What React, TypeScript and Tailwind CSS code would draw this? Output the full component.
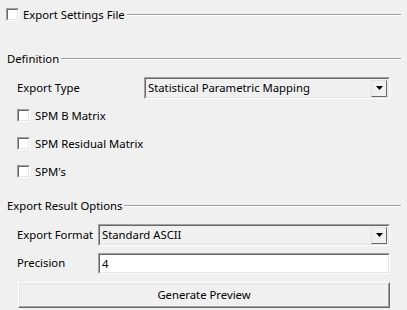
import React from "react";

const font = { fontFamily: '"Noto Sans", "Liberation Sans", sans-serif' };

const CheckBox = () => (
  <div className="w-[13px] h-[13px] shrink-0 border border-t-[#a0a0a0] border-l-[#a0a0a0] border-b-white border-r-white">
    <div className="w-full h-full bg-white border border-t-[#696969] border-l-[#696969] border-b-[#e3e3e3] border-r-[#e3e3e3]" />
  </div>
);

const Etched = ({ className = "" }: { className?: string }) => (
  <div className={"flex-1 h-[2px] border-t border-t-[#a0a0a0] border-b border-b-white " + className} />
);

const Sunken = ({
  className = "",
  children,
}: {
  className?: string;
  children?: React.ReactNode;
}) => (
  <div className={"border border-t-[#a0a0a0] border-l-[#a0a0a0] border-b-white border-r-white " + className}>
    <div className="h-full w-full border border-t-[#696969] border-l-[#696969] border-b-[#e3e3e3] border-r-[#e3e3e3] flex items-center">
      {children}
    </div>
  </div>
);

const Select = ({ value, className }: { value: string; className: string }) => (
  <Sunken className={"bg-[#f0f0f0] " + className}>
    <span className="flex-1 pl-[2px] text-[11.3px] text-black leading-none">{value}</span>
    <div className="w-[16px] h-[17px] mr-[1px] border border-t-[#e3e3e3] border-l-[#e3e3e3] border-b-[#696969] border-r-[#696969] bg-[#f0f0f0] flex items-center justify-center">
      <svg width="7" height="4" viewBox="0 0 7 4">
        <path d="M0 0h7L3.5 4z" fill="#000" />
      </svg>
    </div>
  </Sunken>
);

const CheckRow = ({ label }: { label: string }) => (
  <div className="flex items-center h-[13px] pl-[17px] gap-[5px]">
    <CheckBox />
    <span className="text-[11.3px] leading-none">{label}</span>
  </div>
);

export default function App() {
  return (
    <div className="w-[407px] h-[310px] bg-[#f0f0f0] text-black flex flex-col overflow-hidden text-[11.3px]" style={font}>
      {/* Export settings file */}
      <div className="flex items-center h-[13px] mt-[8px] pl-[6px] pr-[6px]">
        <CheckBox />
        <span className="leading-none ml-[4px] mr-[2px]">Export Settings File</span>
        <Etched />
      </div>

      {/* Definition */}
      <div className="flex items-center h-[16px] mt-[30px] pl-[7px] pr-[6px]">
        <span className="leading-none mr-[2px]">Definition</span>
        <Etched />
      </div>

      <div className="flex items-center mt-[10px] pl-[17px]">
        <span className="w-[127px]">Export Type</span>
        <Select value="Statistical Parametric Mapping" className="w-[246px] h-[22px]" />
      </div>

      <div className="flex flex-col gap-[15px] mt-[10px]">
        <CheckRow label="SPM B Matrix" />
        <CheckRow label="SPM Residual Matrix" />
        <CheckRow label="SPM's" />
      </div>

      {/* Export result options */}
      <div className="flex items-center h-[16px] mt-[20px] pl-[7px] pr-[6px]">
        <span className="leading-none mr-[2px]">Export Result Options</span>
        <Etched />
      </div>

      <div className="flex items-center mt-[10px] pl-[17px]">
        <span className="w-[81px] shrink-0">Export Format</span>
        <Select value="Standard ASCII" className="w-[292px] h-[22px]" />
      </div>

      <div className="flex items-center mt-[7px] pl-[17px]">
        <span className="w-[81px] shrink-0">Precision</span>
        <Sunken className="bg-white w-[292px] h-[21px]">
          <span className="pl-[2px] leading-none">4</span>
        </Sunken>
      </div>

      <div className="mt-[8px] ml-[18px] w-[372px] h-[26px] border border-t-white border-l-white border-b-[#696969] border-r-[#696969] bg-[#f0f0f0]">
        <div className="w-full h-full border border-t-[#e3e3e3] border-l-[#e3e3e3] border-b-[#a0a0a0] border-r-[#a0a0a0] flex items-center justify-center">
          <span className="leading-none">Generate Preview</span>
        </div>
      </div>
    </div>
  );
}
